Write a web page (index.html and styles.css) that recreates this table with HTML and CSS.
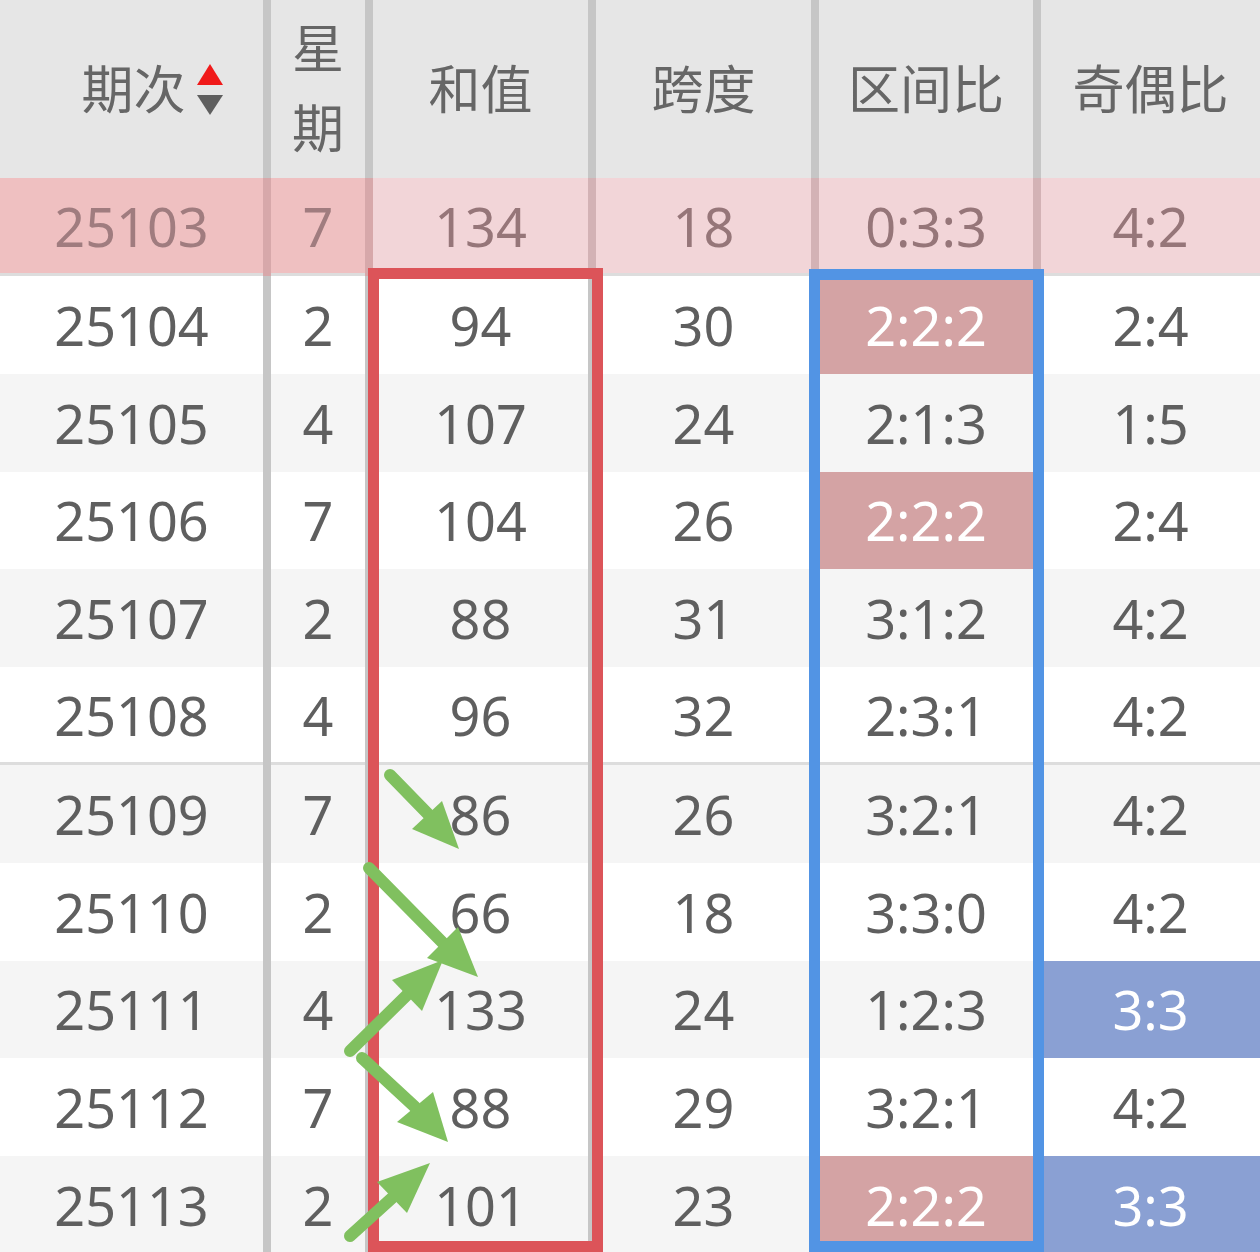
FILE: index.html
```html
<!DOCTYPE html>
<html lang="zh">
<head>
<meta charset="utf-8">
<title>走势表</title>
<link rel="stylesheet" href="styles.css">
</head>
<body>
<div class="sheet">
  <div class="row head">
    <div class="c c1 sortable"><span>期次</span>
      <svg class="sort" width="28" height="54" viewBox="0 0 28 54"><polygon points="14,0 27,21 1,21" fill="#f01a1a"/><polygon points="1,31 27,31 14,51" fill="#5f5f5f"/></svg>
    </div>
    <div class="c c2 wrap">星期</div>
    <div class="c">和值</div>
    <div class="c">跨度</div>
    <div class="c">区间比</div>
    <div class="c">奇偶比</div>
  </div>
  <div class="row hl line">
    <div class="c c1">25103</div><div class="c c2">7</div><div class="c">134</div><div class="c">18</div><div class="c">0:3:3</div><div class="c">4:2</div>
  </div>
  <div class="row">
    <div class="c c1">25104</div><div class="c c2">2</div><div class="c">94</div><div class="c">30</div><div class="c pk">2:2:2</div><div class="c">2:4</div>
  </div>
  <div class="row alt">
    <div class="c c1">25105</div><div class="c c2">4</div><div class="c">107</div><div class="c">24</div><div class="c">2:1:3</div><div class="c">1:5</div>
  </div>
  <div class="row">
    <div class="c c1">25106</div><div class="c c2">7</div><div class="c">104</div><div class="c">26</div><div class="c pk">2:2:2</div><div class="c">2:4</div>
  </div>
  <div class="row alt">
    <div class="c c1">25107</div><div class="c c2">2</div><div class="c">88</div><div class="c">31</div><div class="c">3:1:2</div><div class="c">4:2</div>
  </div>
  <div class="row line">
    <div class="c c1">25108</div><div class="c c2">4</div><div class="c">96</div><div class="c">32</div><div class="c">2:3:1</div><div class="c">4:2</div>
  </div>
  <div class="row alt">
    <div class="c c1">25109</div><div class="c c2">7</div><div class="c">86</div><div class="c">26</div><div class="c">3:2:1</div><div class="c">4:2</div>
  </div>
  <div class="row">
    <div class="c c1">25110</div><div class="c c2">2</div><div class="c">66</div><div class="c">18</div><div class="c">3:3:0</div><div class="c">4:2</div>
  </div>
  <div class="row alt">
    <div class="c c1">25111</div><div class="c c2">4</div><div class="c">133</div><div class="c">24</div><div class="c">1:2:3</div><div class="c bl">3:3</div>
  </div>
  <div class="row">
    <div class="c c1">25112</div><div class="c c2">7</div><div class="c">88</div><div class="c">29</div><div class="c">3:2:1</div><div class="c">4:2</div>
  </div>
  <div class="row alt">
    <div class="c c1">25113</div><div class="c c2">2</div><div class="c">101</div><div class="c">23</div><div class="c pk">2:2:2</div><div class="c bl">3:3</div>
  </div>

  <div class="box box-red"></div>
  <div class="box box-blue"></div>

  <svg class="arrows" width="1260" height="1252" viewBox="0 0 1260 1252">
    <g stroke="#80c05f" stroke-width="12" stroke-linecap="round" fill="none">
      <line x1="390" y1="775" x2="428" y2="814"/>
      <line x1="369" y1="868" x2="443" y2="943"/>
      <line x1="350" y1="1051" x2="407" y2="995"/>
      <line x1="362" y1="1058" x2="415" y2="1107"/>
      <line x1="350" y1="1236" x2="392" y2="1198"/>
    </g>
    <g fill="#80c05f">
      <polygon points="442,801 412,829 459,849"/>
      <polygon points="458,927 427,958 478,977"/>
      <polygon points="392,980 422,1011 443,960"/>
      <polygon points="433,1092 397,1122 448,1142"/>
      <polygon points="377,1182 407,1213 430,1163"/>
    </g>
  </svg>
</div>
</body>
</html>
```

FILE: styles.css
```css
html, body {
  margin: 0;
  padding: 0;
  background: #ffffff;
}

.sheet {
  position: relative;
  width: 1260px;
  height: 1252px;
  overflow: hidden;
  font-family: "Noto Sans", "Noto Sans CJK SC", sans-serif;
  color: #5f5f5f;
}

.row {
  display: grid;
  grid-template-columns: 271px 102px 223px 223px 222px 219px;
  height: 97.8px;
  background: #ffffff;
}

.row.alt {
  background: #f5f5f5;
}

.c {
  box-sizing: border-box;
  display: flex;
  align-items: center;
  justify-content: center;
  border-right: 8px solid #c6c6c6;
  font-size: 54px;
  line-height: 1;
}

.c:last-child {
  border-right: 0;
}

.row.line .c {
  box-shadow: inset 0 -3px 0 #dddddd;
  padding-bottom: 3px;
}

/* header */
.row.head {
  height: 178px;
  background: #e6e6e6;
}

.row.head .c {
  font-family: "Noto Sans CJK SC", sans-serif;
  font-size: 52px;
  color: #666666;
  line-height: 80px;
  text-align: center;
  padding-bottom: 4px;
}

.row.head .sortable {
  padding-left: 42px;
  gap: 10px;
}

.sort {
  display: block;
  margin-top: 8px;
}

.row.head .wrap {
  padding: 0 4px 6px;
  word-break: break-all;
}

/* highlighted first row */
.row.hl {
  height: 98px;
  background: #f2d5d8;
  color: #967679;
}

.row.hl .c {
  border-right-color: #d3b2b5;
}

.row.hl .c1,
.row.hl .c2 {
  background: #efc0c1;
  border-right-color: #d7a8aa;
  color: #a07c7f;
}

/* coloured cells */
.c.pk {
  background: #d4a3a4;
  color: #ffffff;
}

.c.bl {
  background: #8aa0d3;
  color: #ffffff;
}

/* overlays */
.box {
  position: absolute;
  box-sizing: border-box;
  border: 11px solid;
  pointer-events: none;
}

.box-red {
  left: 368px;
  top: 268px;
  width: 235px;
  height: 984px;
  border-color: #dc5459;
}

.box-blue {
  left: 809px;
  top: 269px;
  width: 235px;
  height: 983px;
  border-color: #5294e4;
}

.arrows {
  position: absolute;
  left: 0;
  top: 0;
  pointer-events: none;
}
```
